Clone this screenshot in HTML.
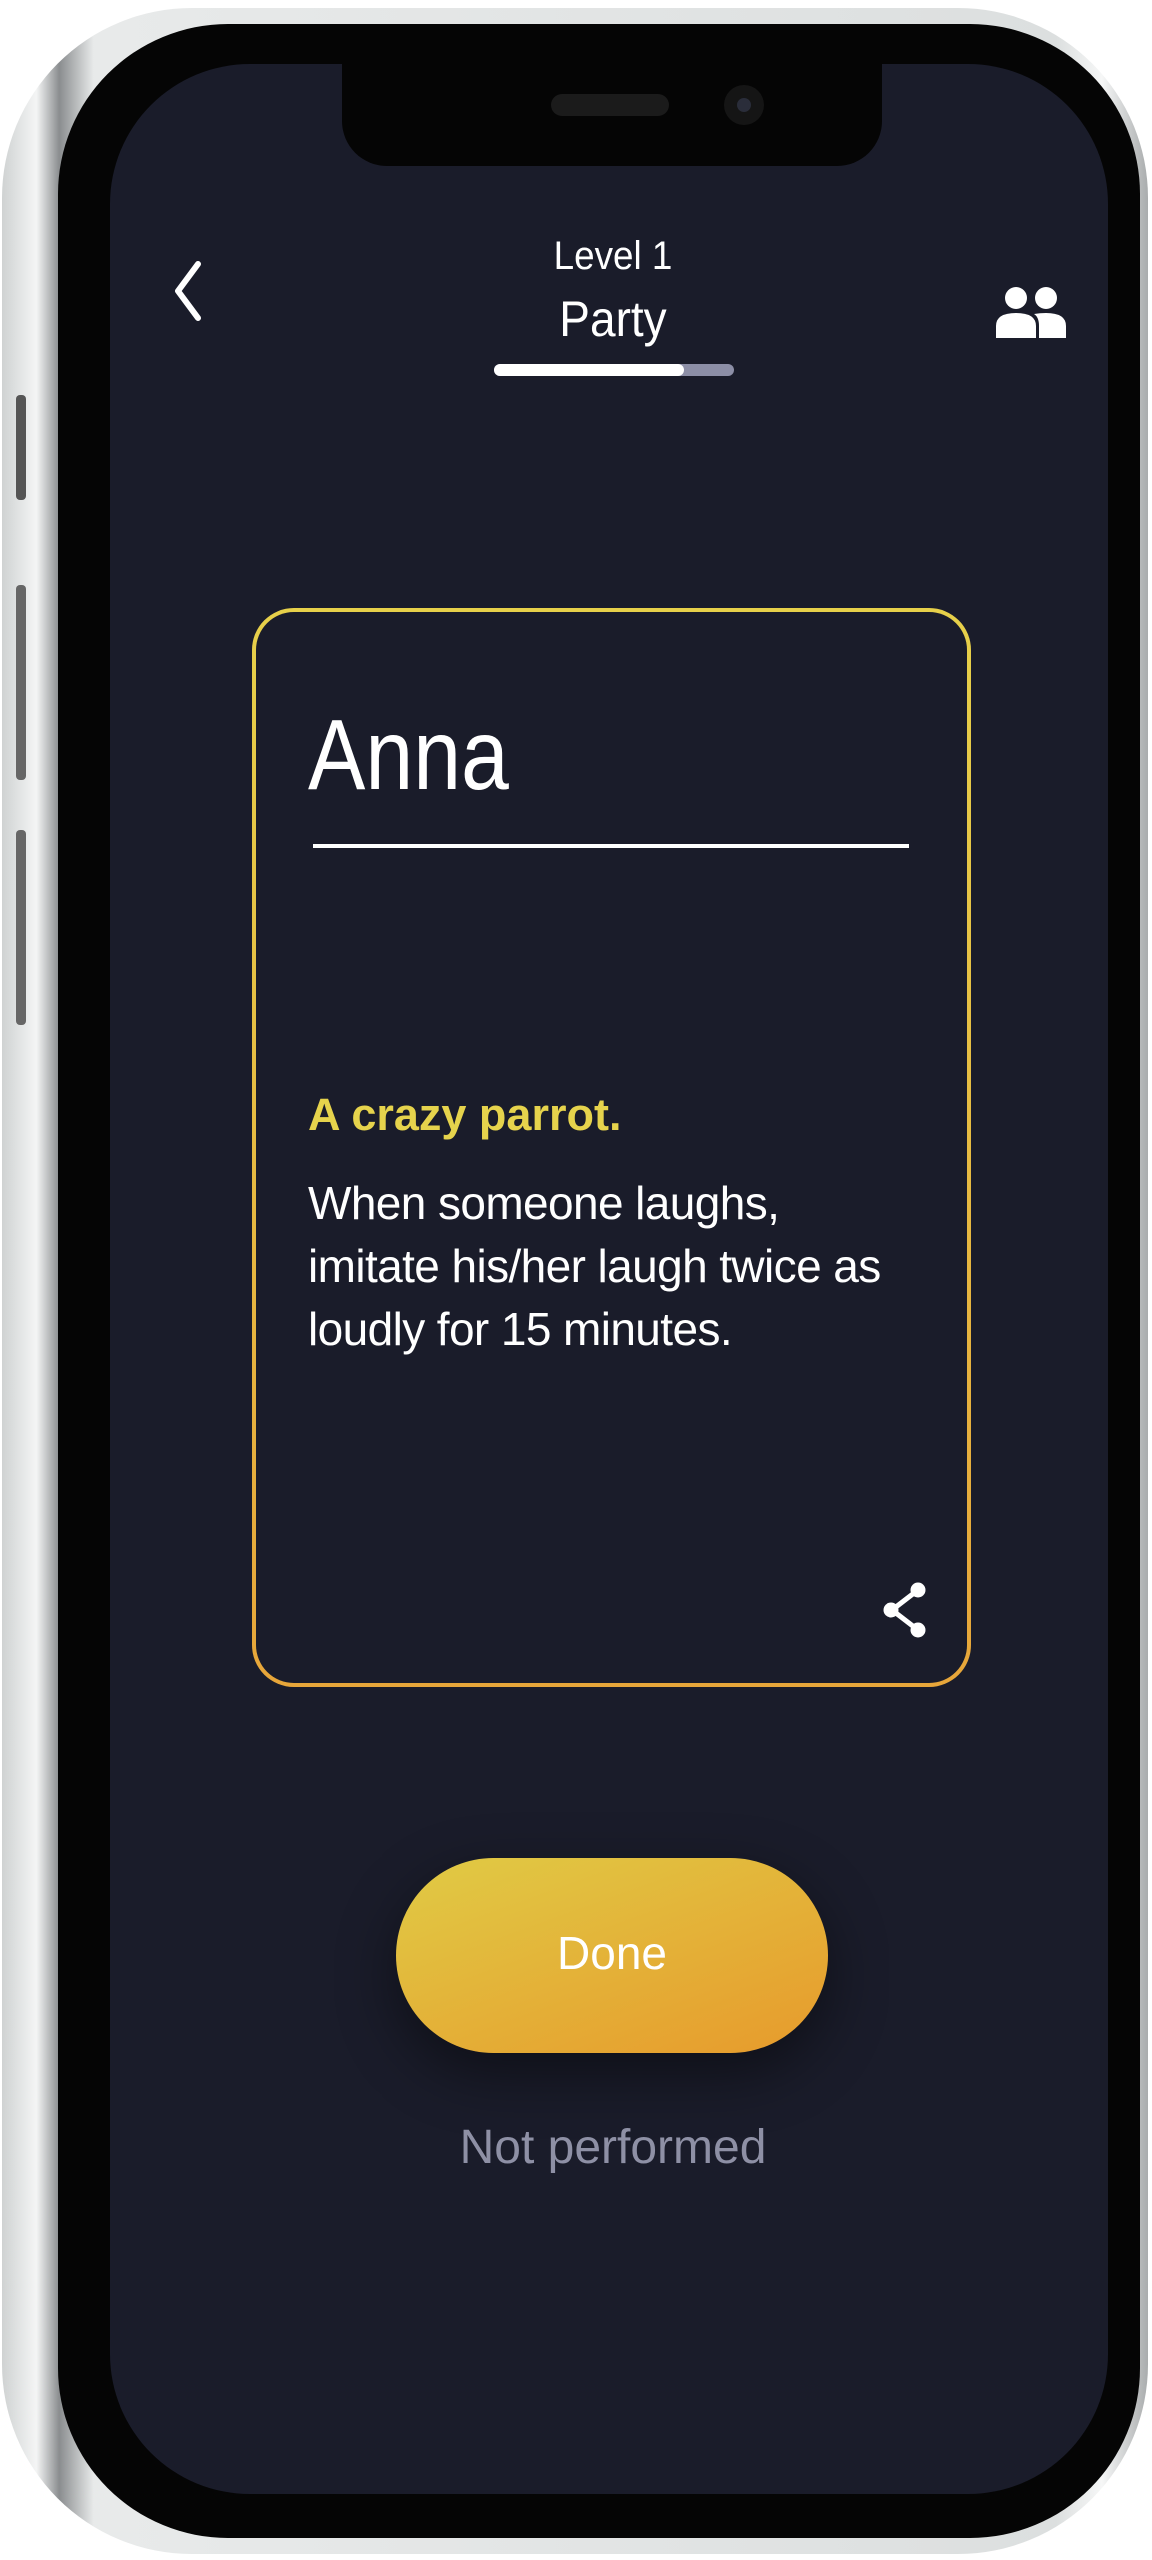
<!DOCTYPE html>
<html><head><meta charset="utf-8"><style>
html,body{margin:0;padding:0;background:#fff;}
body{width:1152px;height:2560px;position:relative;overflow:hidden;font-family:"Liberation Sans",sans-serif;}
.frame{position:absolute;left:2px;top:8px;width:1146px;height:2546px;border-radius:190px;background:linear-gradient(90deg,#cfd2d2 0%,#f4f5f5 3%,#8a8d8f 5%,#e8eaea 8%,#dcdfdf 92%,#f6f7f7 96%,#a9acad 100%);}
.bezel{position:absolute;left:58px;top:24px;width:1082px;height:2514px;border-radius:170px;background:#050505;}
.screen{position:absolute;left:110px;top:64px;width:998px;height:2430px;border-radius:140px;background:#1a1c2a;overflow:hidden;}
.notch{position:absolute;left:232px;top:-10px;width:540px;height:112px;background:#050505;border-radius:0 0 45px 45px;}
.abs{position:absolute;}
.t{color:#fff;position:absolute;white-space:nowrap;}
</style></head><body>
<div class="frame"></div>
<div class="abs" style="left:16px;top:395px;width:10px;height:105px;background:#555;border-radius:4px"></div>
<div class="abs" style="left:16px;top:585px;width:10px;height:195px;background:#666;border-radius:4px"></div>
<div class="abs" style="left:16px;top:830px;width:10px;height:195px;background:#666;border-radius:4px"></div>
<div class="bezel"></div>
<div class="screen">
  <div class="notch">
    <div class="abs" style="left:209px;top:40px;width:118px;height:22px;border-radius:11px;background:#1b1b1b"></div>
    <div class="abs" style="left:382px;top:31px;width:40px;height:40px;border-radius:50%;background:#151515"><div class="abs" style="left:13px;top:13px;width:14px;height:14px;border-radius:50%;background:#2a2d3a"></div></div>
  </div>
  <svg class="abs" style="left:62px;top:196px" width="32" height="62" viewBox="0 0 32 62"><path d="M26 4 L6 31 L26 58" stroke="#fff" stroke-width="6" fill="none" stroke-linecap="round" stroke-linejoin="round"/></svg>
  <div class="t" style="left:0;width:1006px;text-align:center;top:170px;font-size:40px;transform:scaleX(0.92);">Level 1</div>
  <div class="t" style="left:0;width:1006px;text-align:center;top:226px;font-size:50px;transform:scaleX(0.92);">Party</div>
  <div class="abs" style="left:384px;top:300px;width:240px;height:12px;border-radius:6px;background:#8c8ea6"></div>
  <div class="abs" style="left:384px;top:300px;width:190px;height:12px;border-radius:6px;background:#fff"></div>
  <svg class="abs" style="left:886px;top:222px" width="72" height="52" viewBox="0 0 72 52"><circle cx="20" cy="12" r="11" fill="#fff"/><circle cx="50" cy="12" r="11" fill="#fff"/><path d="M0 52 V40 Q0 27 20 27 Q40 27 40 40 V52 Z" fill="#fff"/><path d="M43 52 V40 Q43 31 38 28 Q44 27 50 27 Q70 27 70 40 V52 Z" fill="#fff"/></svg>
  <div class="abs" style="left:142px;top:544px;width:719px;height:1079px;border-radius:42px;background:linear-gradient(180deg,#e7d04a,#e7a63a);"></div>
  <div class="abs" style="left:146px;top:548px;width:711px;height:1071px;border-radius:38px;background:#1a1c2a;"></div>
  <div class="t" style="left:198px;top:634px;font-size:100px;transform:scaleX(0.86);transform-origin:left top;">Anna</div>
  <div class="abs" style="left:203px;top:780px;width:596px;height:4px;background:#fff"></div>
  <div class="t" style="left:198px;top:1025px;font-size:45px;font-weight:bold;color:#e6d34c;">A crazy parrot.</div>
  <div class="t" style="left:198px;top:1108px;font-size:46px;line-height:63px;letter-spacing:-0.6px;">When someone laughs,<br>imitate his/her laugh twice as<br>loudly for 15 minutes.</div>
  <svg class="abs" style="left:772px;top:1518px" width="46" height="56" viewBox="0 0 46 56"><path d="M36 8 L10 28 L36 48" stroke="#fff" stroke-width="5" fill="none"/><circle cx="36" cy="8" r="7.5" fill="#fff"/><circle cx="9" cy="28" r="7.5" fill="#fff"/><circle cx="36" cy="48" r="7.5" fill="#fff"/></svg>
  <div class="abs" style="left:286px;top:1794px;width:432px;height:195px;border-radius:98px;background:linear-gradient(160deg,#e0cb45,#e79a2c);box-shadow:0 20px 60px rgba(0,0,0,0.45);"></div>
  <div class="t" style="left:286px;width:432px;text-align:center;top:1862px;font-size:46px;">Done</div>
  <div class="t" style="left:0;width:1006px;text-align:center;top:2056px;font-size:48px;color:#8e90a5;">Not performed</div>
</div>
</body></html>
